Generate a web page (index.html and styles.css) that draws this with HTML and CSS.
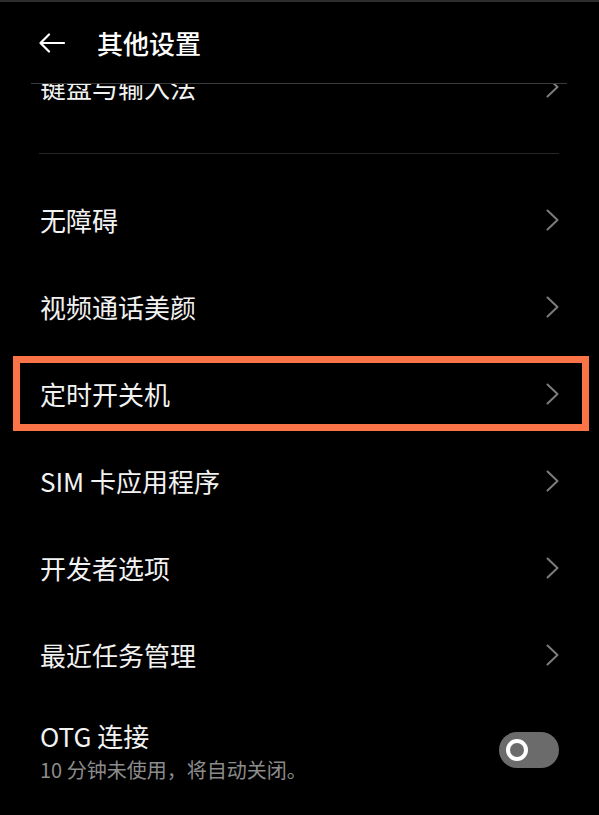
FILE: index.html
```html
<!DOCTYPE html>
<html lang="zh-CN">
  <head>
    <meta charset="UTF-8" />
    <meta name="viewport" content="width=device-width, initial-scale=1.0" />
    <title>其他设置</title>
    <link rel="stylesheet" href="styles.css">
  </head>
  <body>
    <header class="topbar">
      <div class="topbar-inner">
        <svg class="back" width="27" height="20" viewBox="0 0 27 20">
          <path d="M26 10H2.5M11 1.5L2.5 10l8.5 8.5" />
        </svg>
        <h1 class="title">其他设置</h1>
      </div>
    </header>

    <div class="list">
      <div class="list-scroll">
        <div class="row">
          <span class="label">键盘与输入法</span>
          <svg class="chevron" width="13" height="22" viewBox="0 0 13 22"><path d="M1.5 1.5L11.5 11L1.5 20.5" /></svg>
        </div>

        <div class="divider"></div>

        <div class="row">
          <span class="label">无障碍</span>
          <svg class="chevron" width="13" height="22" viewBox="0 0 13 22"><path d="M1.5 1.5L11.5 11L1.5 20.5" /></svg>
        </div>
        <div class="row">
          <span class="label">视频通话美颜</span>
          <svg class="chevron" width="13" height="22" viewBox="0 0 13 22"><path d="M1.5 1.5L11.5 11L1.5 20.5" /></svg>
        </div>
        <div class="row highlight">
          <span class="label">定时开关机</span>
          <svg class="chevron" width="13" height="22" viewBox="0 0 13 22"><path d="M1.5 1.5L11.5 11L1.5 20.5" /></svg>
        </div>
        <div class="row">
          <span class="label">SIM 卡应用程序</span>
          <svg class="chevron" width="13" height="22" viewBox="0 0 13 22"><path d="M1.5 1.5L11.5 11L1.5 20.5" /></svg>
        </div>
        <div class="row">
          <span class="label">开发者选项</span>
          <svg class="chevron" width="13" height="22" viewBox="0 0 13 22"><path d="M1.5 1.5L11.5 11L1.5 20.5" /></svg>
        </div>
        <div class="row">
          <span class="label">最近任务管理</span>
          <svg class="chevron" width="13" height="22" viewBox="0 0 13 22"><path d="M1.5 1.5L11.5 11L1.5 20.5" /></svg>
        </div>

        <div class="row row-toggle">
          <div class="texts">
            <div class="label">OTG 连接</div>
            <div class="summary">10 分钟未使用，将自动关闭。</div>
          </div>
          <div class="switch"><span class="knob"></span></div>
        </div>
      </div>
    </div>
  </body>
</html>
```

FILE: styles.css
```css
html,
body {
  margin: 0;
  height: 100%;
  background: #000;
}
body {
  font-family: "Noto Sans CJK SC", "Noto Sans", sans-serif;
  color: #f2f2f2;
  overflow: hidden;
}

.topbar {
  border-top: 2px solid #2c2c2c;
}
.topbar-inner {
  height: 81px;
  margin: 0 32px 0 31px;
  padding-left: 7px;
  display: flex;
  align-items: center;
  gap: 32px;
  border-bottom: 1px solid #3a3a3a;
}
.back path {
  fill: none;
  stroke: #fff;
  stroke-width: 2.2;
  stroke-linecap: round;
  stroke-linejoin: round;
}
.title {
  margin: 0;
  font-size: 26px;
  font-weight: 500;
  color: #fff;
  line-height: 1;
}

/* scrolled list, first row slides under the header */
.list {
  height: calc(100% - 84px);
  overflow: hidden;
}
.list-scroll {
  margin-top: -41px;
}

.row {
  height: 87px;
  padding: 0 40px;
  box-sizing: border-box;
  display: flex;
  align-items: center;
  justify-content: space-between;
}
.label {
  font-size: 26px;
  line-height: 34px;
}
.chevron path {
  fill: none;
  stroke: #7c7c7c;
  stroke-width: 2;
  stroke-linecap: round;
  stroke-linejoin: round;
}

.divider {
  height: 1px;
  margin: 23px 40px 22px 39px;
  background: #262626;
}

.highlight {
  position: relative;
}
.highlight::after {
  content: "";
  position: absolute;
  left: 13px;
  right: 10px;
  top: 6px;
  bottom: 6px;
  border: 7px solid #fa7447;
}

.row-toggle {
  height: auto;
  padding-top: 21px;
  align-items: flex-start;
}
.summary {
  margin-top: 3px;
  font-size: 20px;
  line-height: 28px;
  color: #8c8c8c;
}
.switch {
  width: 60px;
  height: 36px;
  margin-top: 13px;
  padding-left: 7px;
  box-sizing: border-box;
  border-radius: 18px;
  background: #6b6b6b;
  display: flex;
  align-items: center;
}
.knob {
  width: 22px;
  height: 22px;
  box-sizing: border-box;
  border: 4px solid #fff;
  border-radius: 50%;
}
```
